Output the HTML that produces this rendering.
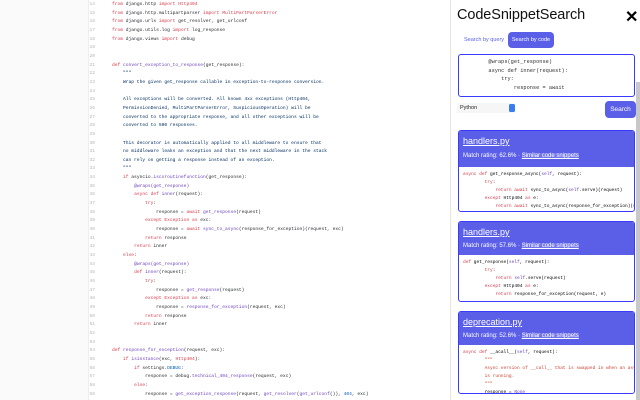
<!DOCTYPE html>
<html><head><meta charset="utf-8"><style>
*{margin:0;padding:0;box-sizing:border-box}
body{width:640px;height:400px;overflow:hidden;background:#fafafa;position:relative;font-family:"Liberation Sans",sans-serif}
#code{position:absolute;left:88px;top:0;width:362px;height:400px;background:#fff;border-left:1px solid #eee;overflow:hidden}
pre{font-family:"Liberation Mono",monospace;font-size:4.5px;line-height:8.7px;white-space:pre}
#nums{position:absolute;left:-2px;top:1px;width:8px;text-align:right;color:#b5b5b5}
#src{position:absolute;left:23px;top:1px;color:#24292e}
#nums,#src{font-size:4.6px;line-height:8.66px}
.k{color:#d73a49}.f{color:#6f42c1}.s{color:#032f62}.n{color:#005cc5}
#side{position:absolute;left:450px;top:0;width:190px;height:400px;background:#fff;border-left:1px solid #e4e4e4}
h1{position:absolute;left:6px;top:7px;font-size:14.5px;font-weight:normal;color:#111;letter-spacing:-0.1px}
.x{position:absolute;left:174px;top:7px;font-size:16px;font-weight:bold;color:#000}
.tabq{position:absolute;left:13px;top:37px;font-size:5.5px;color:#5b5fe8}
.tabc{position:absolute;left:57px;top:32px;width:46px;height:16px;background:#5b5fe8;border-radius:4px;color:#fff;font-size:5.5px;text-align:center;line-height:16px}
.ta{position:absolute;left:7px;top:54px;width:177px;height:43px;border:1px solid #3a3aff;border-radius:3px;overflow:hidden}
.ta pre{position:absolute;left:4px;top:3px;font-size:5.3px;line-height:8.7px;color:#333}
.sel{position:absolute;left:6px;top:103px;width:58px;height:10px;background:#f6f6f6;font-size:5.5px;line-height:10px;padding-left:3px;color:#222}
.sel i{position:absolute;right:0;top:1px;width:6px;height:8px;background:#3b7bf0;border-radius:1.5px}
.btn{position:absolute;left:154px;top:101px;width:31px;height:17px;background:#5b5fe8;border-radius:4px;color:#fff;font-size:6.5px;text-align:center;line-height:17px}
.card{position:absolute;left:7px;width:177px;border:1px solid #3a3aff;border-radius:3px;overflow:hidden;background:#fff}
.hd{background:#5b5fe8;color:#fff;position:relative}
.hd b{position:absolute;left:4px;top:5px;font-weight:normal;font-size:9px;text-decoration:underline}
.hd span{position:absolute;left:4px;font-size:6px}
.hd u{background:rgba(255,255,255,.15)}
.card pre{padding:4px 0 0 4px;font-size:4.5px;line-height:8px}
.r{color:#c43}
.sb{position:absolute;left:636px;top:82px;width:4px;height:318px;background:#c8c8c8}
</style></head><body>
<div id="code">
<pre id="nums">14
15
16
17
18
19
20
21
22
23
24
25
26
27
28
29
30
31
32
33
34
35
36
37
38
39
40
41
42
43
44
45
46
47
48
49
50
51
52
53
54
55
56
57
58
59</pre>
<pre id="src"><span class="k">from</span> django.http <span class="k">import</span> <span class="k">Http404</span>
<span class="k">from</span> django.http.multipartparser <span class="k">import</span> <span class="k">MultiPartParserError</span>
<span class="k">from</span> django.urls <span class="k">import</span> get_resolver, get_urlconf
<span class="k">from</span> django.utils.log <span class="k">import</span> log_response
<span class="k">from</span> django.views <span class="k">import</span> debug


<span class="k">def</span> <span class="f">convert_exception_to_response</span>(get_response):
<span class="s">    """
    Wrap the given get_response callable in exception-to-response conversion.

    All exceptions will be converted. All known 4xx exceptions (Http404,
    PermissionDenied, MultiPartParserError, SuspiciousOperation) will be
    converted to the appropriate response, and all other exceptions will be
    converted to 500 responses.

    This decorator is automatically applied to all middleware to ensure that
    no middleware leaks an exception and that the next middleware in the stack
    can rely on getting a response instead of an exception.
    """</span>
    <span class="k">if</span> asyncio.<span class="f">iscoroutinefunction</span>(get_response):
        <span class="f">@wraps(get_response)</span>
        <span class="k">async def</span> <span class="f">inner</span>(request):
            <span class="k">try</span>:
                response = <span class="k">await</span> <span class="f">get_response</span>(request)
            <span class="k">except Exception as</span> exc:
                response = <span class="k">await</span> <span class="f">sync_to_async</span>(response_for_exception)(request, exc)
            <span class="k">return</span> response
        <span class="k">return</span> inner
    <span class="k">else</span>:
        <span class="f">@wraps(get_response)</span>
        <span class="k">def</span> <span class="f">inner</span>(request):
            <span class="k">try</span>:
                response = <span class="f">get_response</span>(request)
            <span class="k">except Exception as</span> exc:
                response = <span class="f">response_for_exception</span>(request, exc)
            <span class="k">return</span> response
        <span class="k">return</span> inner


<span class="k">def</span> <span class="f">response_for_exception</span>(request, exc):
    <span class="k">if</span> <span class="f">isinstance</span>(exc, <span class="k">Http404</span>):
        <span class="k">if</span> settings.<span class="n">DEBUG</span>:
            response = debug.<span class="f">technical_404_response</span>(request, exc)
        <span class="k">else</span>:
            response = <span class="f">get_exception_response</span>(request, <span class="f">get_resolver</span>(<span class="f">get_urlconf</span>()), <span class="n">404</span>, exc)</pre>
</div>
<div id="side">
<h1>CodeSnippetSearch</h1>
<div class="x">✕</div>
<div class="tabq">Search by query</div>
<div class="tabc">Search by code</div>
<div class="ta"><pre>        @wraps(get_response)
        async def inner(request):
            try:
                response = await</pre></div>
<div class="sel">Python<i></i></div>
<div class="btn">Search</div>

<div class="card" style="top:130px;height:82px">
<div class="hd" style="height:36px"><b>handlers.py</b><span style="top:22px">Match rating: 62.6% · <u>Similar code snippets</u></span></div>
<pre><span class="k">async def</span> get_response_async(<span class="f">self</span>, request):
        <span class="k">try</span>:
            <span class="k">return await</span> sync_to_async(<span class="f">self</span>.serve)(request)
        <span class="k">except</span> Http404 <span class="k">as</span> e:
            <span class="k">return await</span> sync_to_async(response_for_exception)(request, e)</pre>
</div>

<div class="card" style="top:221px;height:81px">
<div class="hd" style="height:33px"><b>handlers.py</b><span style="top:21px">Match rating: 57.6% · <u>Similar code snippets</u></span></div>
<pre><span class="k">def</span> get_response(<span class="f">self</span>, request):
        <span class="k">try</span>:
            <span class="k">return</span> <span class="f">self</span>.serve(request)
        <span class="k">except</span> Http404 <span class="k">as</span> e:
            <span class="k">return</span> response_for_exception(request, e)</pre>
</div>

<div class="card" style="top:311px;height:83px">
<div class="hd" style="height:33px"><b>deprecation.py</b><span style="top:21px">Match rating: 52.6% · <u>Similar code snippets</u></span></div>
<pre><span class="k">async def</span> __acall__(<span class="f">self</span>, request):
<span class="r">        """
        Async version of __call__ that is swapped in when an async
        is running.
        """</span>
        response = <span class="f">None</span></pre>
</div>
</div>
<div class="sb"></div>
</body></html>
